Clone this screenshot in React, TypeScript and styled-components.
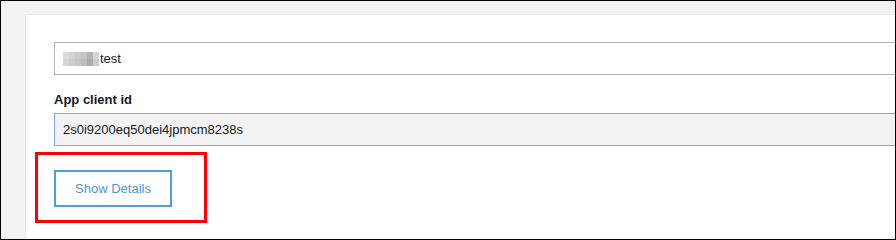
import React from 'react';
import styled, { createGlobalStyle } from 'styled-components';

const GlobalStyle = createGlobalStyle`
  html, body {
    margin: 0;
    padding: 0;
  }
  body {
    font-family: 'Liberation Sans', Arial, sans-serif;
    color: #16191f;
  }
`;

// blurred name in front of "test"
const MOSAIC = [
  '#dcdcdc', '#d2d2d2', '#cbcbcb', '#c4c4c4', '#b3b3b3', '#d4d4d4',
  '#d6d6d6', '#cdcdcd', '#c7c7c7', '#bebebe', '#ababab', '#cccccc',
];

const App = () => {
  return (
    <>
      <GlobalStyle />
      <Frame>
        <Card>
          <Field>
            <Mosaic>
              {MOSAIC.map((c, i) => (
                <MosaicCell key={i} style={{ background: c }} />
              ))}
            </Mosaic>
            test
          </Field>
          <Label>App client id</Label>
          <Field $focused>2s0i9200eq50dei4jpmcm8238s</Field>
          <Highlight>
            <DetailsButton type="button">Show Details</DetailsButton>
          </Highlight>
        </Card>
      </Frame>
    </>
  );
};

export default App;

const Frame = styled.div`
  box-sizing: border-box;
  width: 896px;
  height: 240px;
  border: 1px solid #000;
  background: #f2f3f3;
  overflow: hidden;
  padding: 13px 0 0 24px;
`;

const Card = styled.div`
  display: flex;
  flex-direction: column;
  align-items: flex-start;
  margin-right: -20px;
  height: 240px;
  background: #fff;
  border: 1px solid #e7e9e9;
  padding: 27px 0 0 28px;
`;

const Field = styled.div<{ $focused?: boolean }>`
  box-sizing: border-box;
  align-self: stretch;
  display: flex;
  align-items: center;
  height: 33px;
  padding: 0 8px;
  font-size: 13px;
  color: #16191f;
  background: ${({ $focused }) => ($focused ? '#f2f2f2' : '#fff')};
  border: 1px solid ${({ $focused }) => ($focused ? '#7faaf2' : '#b4b4b4')};
  border-right: none;
`;

const Mosaic = styled.span`
  display: grid;
  grid-template-columns: repeat(6, 6px);
  grid-template-rows: repeat(2, 7px);
  margin-right: 1px;
`;

const MosaicCell = styled.span`
  display: block;
`;

const Label = styled.div`
  margin: 17px 0 5px;
  font-size: 13px;
  font-weight: bold;
  line-height: 16px;
  color: #16191f;
`;

const Highlight = styled.div`
  margin: 6px 0 0 -19px;
  padding: 15px 32px 13px 16px;
  border: 3px solid #ff0000;
`;

const DetailsButton = styled.button`
  box-sizing: border-box;
  height: 37px;
  width: 118px;
  padding: 0;
  background: #fff;
  border: 2px solid #4b9fdb;
  color: #4a98d6;
  font-family: 'Liberation Sans', Arial, sans-serif;
  font-size: 13px;
  cursor: pointer;
`;
